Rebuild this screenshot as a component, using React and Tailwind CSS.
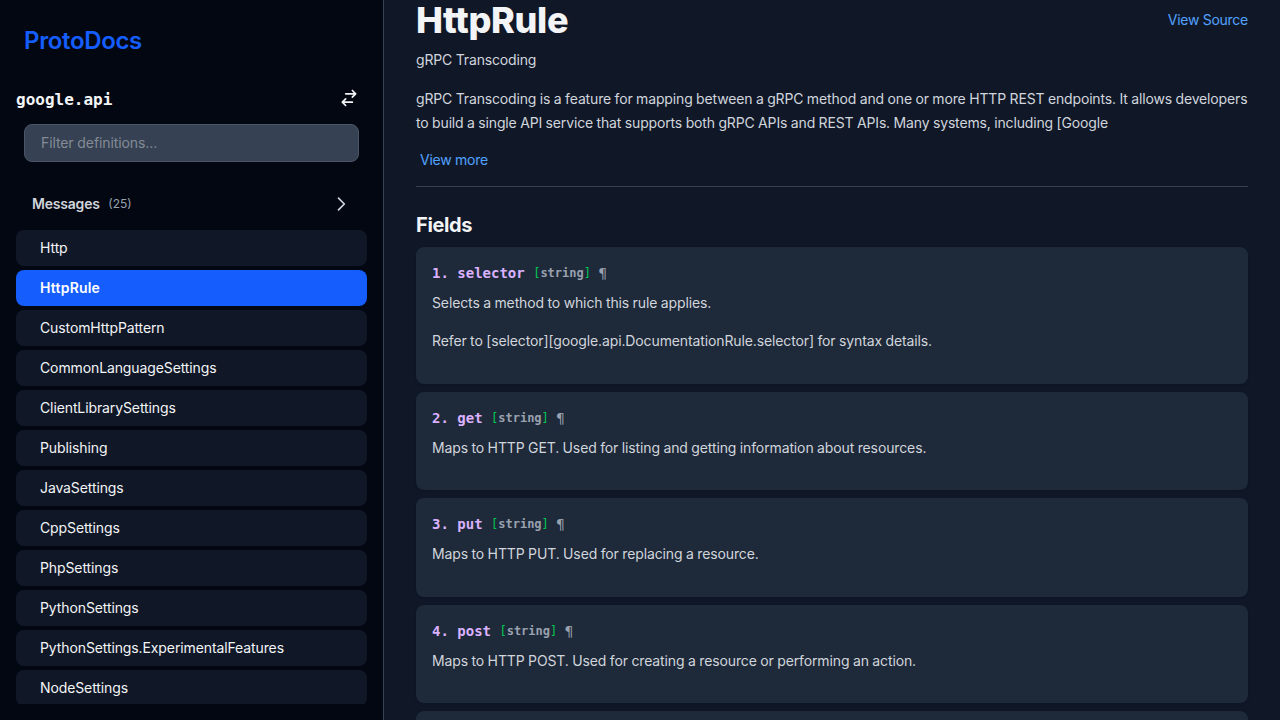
const messages = [
  'Http',
  'HttpRule',
  'CustomHttpPattern',
  'CommonLanguageSettings',
  'ClientLibrarySettings',
  'Publishing',
  'JavaSettings',
  'CppSettings',
  'PhpSettings',
  'PythonSettings',
  'PythonSettings.ExperimentalFeatures',
  'NodeSettings',
];

const fields = [
  {
    name: 'selector',
    type: 'string',
    text: [
      'Selects a method to which this rule applies.',
      'Refer to [selector][google.api.DocumentationRule.selector] for syntax details.',
    ],
  },
  {
    name: 'get',
    type: 'string',
    text: ['Maps to HTTP GET. Used for listing and getting information about resources.'],
  },
  { name: 'put', type: 'string', text: ['Maps to HTTP PUT. Used for replacing a resource.'] },
  {
    name: 'post',
    type: 'string',
    text: ['Maps to HTTP POST. Used for creating a resource or performing an action.'],
  },
];

function Icon({ d }) {
  return (
    <svg className="h-5 w-5" fill="none" viewBox="0 0 24 24" stroke="currentColor" strokeWidth="2">
      <path strokeLinecap="round" strokeLinejoin="round" d={d} />
    </svg>
  );
}

function Sidebar() {
  return (
    <aside className="flex h-full w-96 shrink-0 flex-col border-r border-gray-700 bg-gray-950 p-4">
      <h1 className="px-2 pt-2 text-2xl leading-[34px] font-semibold tracking-[-0.35px] text-blue-600">
        ProtoDocs
      </h1>
      <div className="mt-[22px] flex h-9 items-center justify-between">
        <h2 className="pt-[3px] font-['DejaVu_Sans_Mono',monospace] text-base font-bold text-gray-100">
          google.api
        </h2>
        <button className="p-2 text-gray-100">
          <Icon d="M8 7h12m0 0l-4-4m4 4l-4 4m0 6H4m0 0l4 4m-4-4l4-4" />
        </button>
      </div>
      <div className="mt-2 px-2">
        <input
          className="block h-[38px] w-full rounded-lg border border-gray-600 bg-gray-700 px-4 pb-0.5 text-sm tracking-[-0.1px] text-gray-100 placeholder:text-[#848b96]"
          placeholder="Filter definitions..."
        />
      </div>
      <div className="mt-6 flex h-9 items-center justify-between px-4 text-gray-300">
        <div className="flex items-center">
          <span className="text-sm font-semibold tracking-[-0.2px]">Messages</span>
          <span className="ml-[8.5px] text-xs text-gray-400">(25)</span>
        </div>
        <Icon d="M9 5l7 7-7 7" />
      </div>
      <ul className="mt-2 min-h-0 flex-1 space-y-1 overflow-hidden">
        {messages.map((m) => (
          <li
            key={m}
            className={
              m === 'HttpRule'
                ? 'h-9 rounded-lg bg-blue-600 px-6 py-2 text-sm font-semibold tracking-[0.2px] text-white'
                : 'h-9 rounded-lg bg-gray-900 px-6 py-2 text-sm tracking-[-0.11px] text-gray-100'
            }
          >
            {m}
          </li>
        ))}
      </ul>
    </aside>
  );
}

function Field({ index, field }) {
  return (
    <div className="rounded-lg bg-gray-800 px-4 pt-4 pb-[14.55px] shadow-sm">
      <h3 className="flex h-5 items-center font-['DejaVu_Sans_Mono',monospace] text-sm font-bold text-purple-300">
        <span className="whitespace-pre">{`${index}. ${field.name} `}</span>
        <span className="text-xs font-normal text-green-500">
          [<span className="font-bold text-gray-400">{field.type}</span>]
        </span>
        <span className="ml-[7.5px] font-normal text-gray-400">¶</span>
      </h3>
      <div className="mt-[9.2px] space-y-4 pb-4 text-sm leading-[22.75px] tracking-[-0.12px] text-gray-300 [word-spacing:-0.3px]">
        {field.text.map((t) => (
          <p key={t}>{t}</p>
        ))}
      </div>
    </div>
  );
}

export default function App() {
  return (
    <div className="flex h-screen overflow-hidden bg-gray-900 font-['Inter',sans-serif]">
      <Sidebar />
      <main className="min-w-0 flex-1 overflow-hidden px-8">
        <div className="flex h-10 items-center justify-between">
          <h1 className="text-4xl leading-10 font-extrabold tracking-[-0.35px] text-gray-100">
            HttpRule
          </h1>
          <a className="text-sm tracking-[-0.27px] text-blue-400">View Source</a>
        </div>
        <div className="mt-2 text-sm leading-6 tracking-[-0.15px] text-gray-300 [word-spacing:-0.25px]">
          <p>gRPC Transcoding</p>
          <p className="mt-[15px] -mr-2">
            gRPC Transcoding is a feature for mapping between a gRPC method and one or more HTTP REST
            endpoints. It allows developers to build a single API service that supports both gRPC APIs
            and REST APIs. Many systems, including [Google
          </p>
        </div>
        <button className="mt-[15px] ml-1 block text-sm tracking-[-0.25px] text-blue-400">
          View more
        </button>
        <hr className="mt-4 border-gray-700" />
        <h2 className="mt-6 text-xl font-bold tracking-[-0.35px] text-gray-100">Fields</h2>
        <div className="mt-[7.5px] space-y-2">
          {fields.map((f, i) => (
            <Field key={f.name} index={i + 1} field={f} />
          ))}
          <div className="h-24 rounded-lg bg-gray-800 shadow-sm" />
        </div>
      </main>
    </div>
  );
}
